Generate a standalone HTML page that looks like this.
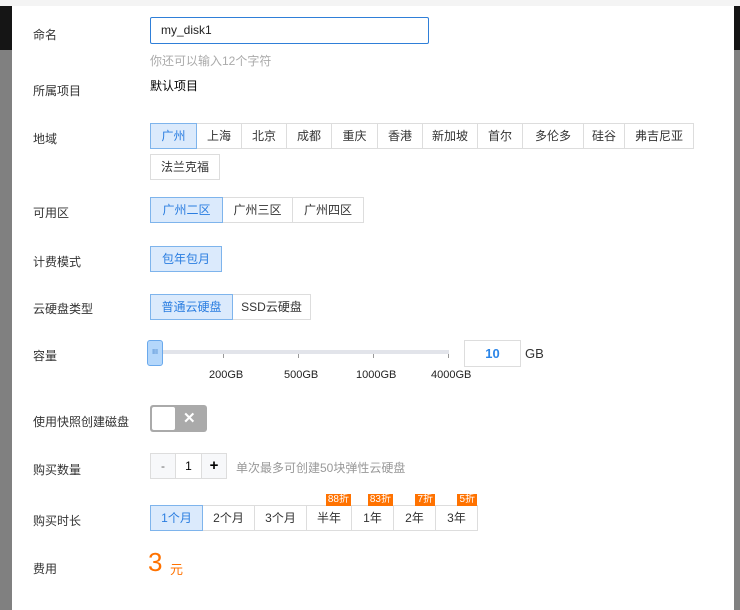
<!DOCTYPE html><html><head><meta charset="utf-8"><style>
*{box-sizing:border-box;margin:0;padding:0}
body{width:740px;height:610px;position:relative;overflow:hidden;background:#808080;font-family:"Liberation Sans","Noto Sans CJK SC",sans-serif;font-size:12px;color:#333}
.abs{position:absolute}
.lbl{position:absolute;left:33px;font-size:12px;color:#333}
.g{position:absolute;display:flex}
.g div{height:26px;line-height:24px;border:1px solid #ddd;margin-left:-1px;text-align:center;background:#fff;color:#333;font-size:12px}
.g div:first-child{margin-left:0}
.g .on{background:#dbeafc;border-color:#7eb4ec;color:#2a7de0;position:relative;z-index:1}
.bd{position:absolute;top:-12px;right:0;background:#ff7200;color:#fff;font-size:10px;line-height:12px;height:12px;padding:0 2px}
</style></head><body>
<div class="abs" style="left:0;top:0;width:740px;height:6px;background:#f4f4f4"></div>
<div class="abs" style="left:0;top:6px;width:12px;height:44px;background:#151515"></div>
<div class="abs" style="left:734px;top:6px;width:6px;height:44px;background:#151515"></div>
<div class="abs" style="left:12px;top:6px;width:722px;height:604px;background:#fff"></div>

<div class="lbl" style="top:26px">命名</div>
<div class="abs" style="left:150px;top:17px;width:279px;height:27px;border:1px solid #2f7fd8;border-radius:2px;padding-left:10px;line-height:25px;font-size:12px;color:#222">my_disk1</div>
<div class="abs" style="left:150px;top:52px;color:#aaa">你还可以输入12个字符</div>
<div class="lbl" style="top:82px">所属项目</div>
<div class="abs" style="left:150px;top:77px;color:#000;font-size:12px">默认项目</div>

<div class="lbl" style="top:130px">地域</div>
<div class="g" style="left:150px;top:123px">
<div class="on" style="width:47px">广州</div><div style="width:46px">上海</div><div style="width:46px">北京</div><div style="width:46px">成都</div><div style="width:47px">重庆</div><div style="width:46px">香港</div><div style="width:56px">新加坡</div><div style="width:46px">首尔</div><div style="width:62px">多伦多</div><div style="width:42px">硅谷</div><div style="width:70px">弗吉尼亚</div></div>
<div class="g" style="left:150px;top:154px"><div style="width:70px">法兰克福</div></div>

<div class="lbl" style="top:204px">可用区</div>
<div class="g" style="left:150px;top:197px"><div class="on" style="width:73px">广州二区</div><div style="width:71px">广州三区</div><div style="width:72px">广州四区</div></div>
<div class="lbl" style="top:253px">计费模式</div>
<div class="g" style="left:150px;top:246px"><div class="on" style="width:72px">包年包月</div></div>
<div class="lbl" style="top:300px">云硬盘类型</div>
<div class="g" style="left:150px;top:294px"><div class="on" style="width:83px">普通云硬盘</div><div style="width:79px">SSD云硬盘</div></div>

<div class="lbl" style="top:347px">容量</div>
<div class="abs" style="left:155px;top:350px;width:294px;height:4px;background:#e2e4ea"></div>
<div class="abs" style="left:223px;top:354px;width:1px;height:4px;background:#999"></div>
<div class="abs" style="left:298px;top:354px;width:1px;height:4px;background:#999"></div>
<div class="abs" style="left:373px;top:354px;width:1px;height:4px;background:#999"></div>
<div class="abs" style="left:448px;top:354px;width:1px;height:4px;background:#999"></div>
<div class="abs" style="left:147px;top:340px;width:16px;height:26px;background:#b4d7fb;border:1px solid #6aa9ec;border-radius:3px;font-size:7px;color:#3a7dc8;text-align:center;line-height:24px">III</div>
<div class="abs" style="left:209px;top:369px;font-size:11px;color:#222">200GB</div>
<div class="abs" style="left:284px;top:369px;font-size:11px;color:#222">500GB</div>
<div class="abs" style="left:356px;top:369px;font-size:11px;color:#222">1000GB</div>
<div class="abs" style="left:431px;top:369px;font-size:11px;color:#222">4000GB</div>
<div class="abs" style="left:464px;top:340px;width:57px;height:27px;border:1px solid #ddd;text-align:center;line-height:25px;color:#2a85e8;font-weight:bold;font-size:13px">10</div>
<div class="abs" style="left:525px;top:346px;font-size:13px">GB</div>

<div class="lbl" style="top:413px">使用快照创建磁盘</div>
<div class="abs" style="left:150px;top:405px;width:57px;height:27px;background:#aaa;border-radius:3px"></div>
<div class="abs" style="left:152px;top:407px;width:23px;height:23px;background:#fff;border-radius:2px"></div>
<div class="abs" style="left:183px;top:409px;color:#fff;font-size:15px;font-weight:bold">✕</div>

<div class="lbl" style="top:461px">购买数量</div>
<div class="g" style="left:150px;top:453px"><div style="width:26px;background:#f7f8fa;color:#666">-</div><div style="width:27px;color:#000">1</div><div style="width:26px;background:#f7f8fa;color:#000;font-size:15px;font-weight:bold">+</div></div>
<div class="abs" style="left:236px;top:459px;color:#999">单次最多可创建50块弹性云硬盘</div>

<div class="lbl" style="top:512px">购买时长</div>
<div class="g" style="left:150px;top:505px"><div class="on" style="width:53px">1个月</div><div style="width:53px">2个月</div><div style="width:53px">3个月</div><div style="width:46px;position:relative">半年<span class="bd">88折</span></div><div style="width:43px;position:relative">1年<span class="bd">83折</span></div><div style="width:43px;position:relative">2年<span class="bd">7折</span></div><div style="width:43px;position:relative">3年<span class="bd">5折</span></div></div>

<div class="lbl" style="top:560px">费用</div>
<div class="abs" style="left:148px;top:547px;color:#ff7200;font-size:26px">3</div>
<div class="abs" style="left:170px;top:559px;color:#ff7200;font-size:13px">元</div>
</body></html>
